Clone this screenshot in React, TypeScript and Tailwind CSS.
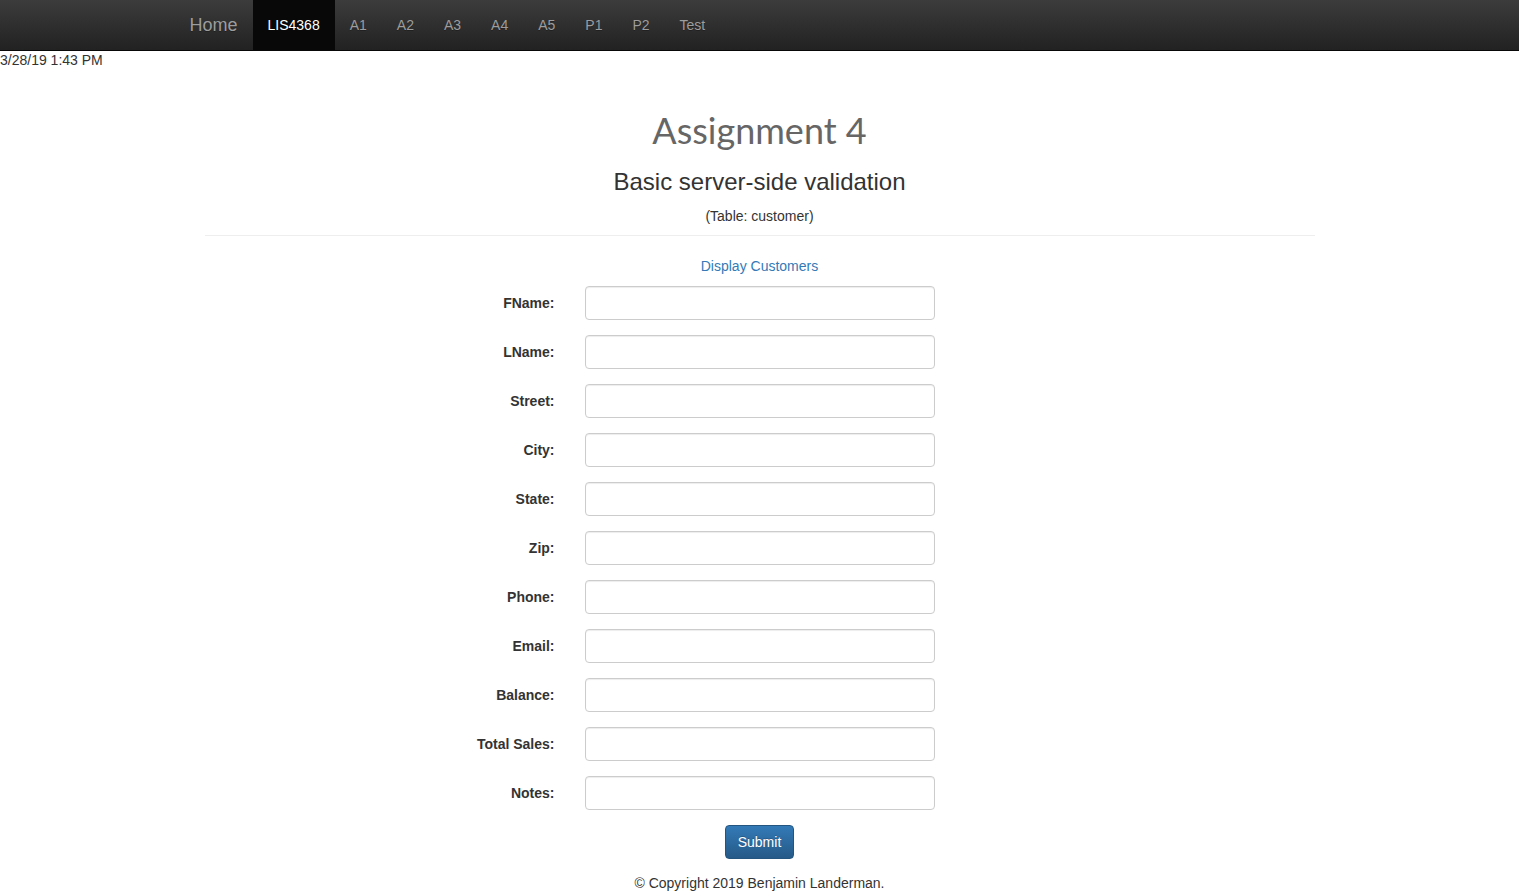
const navLinks = ['A1', 'A2', 'A3', 'A4', 'A5', 'P1', 'P2', 'Test']

const fields = [
  'FName',
  'LName',
  'Street',
  'City',
  'State',
  'Zip',
  'Phone',
  'Email',
  'Balance',
  'Total Sales',
  'Notes',
]

function NavBar() {
  return (
    <nav className="h-[51px] border-b border-[#080808] bg-gradient-to-b from-[#3c3c3c] to-[#222222]">
      <div className="mx-auto flex h-[50px] w-[1170px] px-[15px]">
        <a className="-ml-[15px] flex h-[50px] items-center px-[15px] text-[18px] text-[#9d9d9d] [text-shadow:0_1px_0_rgba(0,0,0,0.25)]">
          Home
        </a>
        <ul className="flex">
          <li className="flex h-[50px] items-center bg-[#080808] px-[15px] text-[14px] text-white">LIS4368</li>
          {navLinks.map((l) => (
            <li key={l} className="flex h-[50px] items-center px-[15px] text-[14px] text-[#9d9d9d] [text-shadow:0_1px_0_rgba(0,0,0,0.25)]">
              {l}
            </li>
          ))}
        </ul>
      </div>
    </nav>
  )
}

function FormRow({ label }: { label: string }) {
  return (
    <div className="mb-[15px] grid grid-cols-[365px_350px] items-center gap-x-[30px]">
      <label className="text-right text-[14px] font-bold text-[#333]">{label}:</label>
      <input
        type="text"
        className="h-[34px] w-[350px] rounded-[4px] border border-[#ccc] bg-white px-3 text-[14px] shadow-[inset_0_1px_1px_rgba(0,0,0,0.075)] outline-none"
      />
    </div>
  )
}

export default function App() {
  return (
    <div className="min-h-[894px] bg-white font-['Liberation_Sans',Arial,sans-serif] text-[14px] leading-[20px] text-[#333]">
      <NavBar />
      <div className="h-[20px] leading-[18px]">3/28/19 1:43 PM</div>

      <div className="mx-auto w-[1170px] px-[15px]">
        <div className="mx-[15px] text-center">
          <h2 className="mt-[38px] font-['Lato',sans-serif] text-[36px] leading-[42px] text-[#666]">Assignment 4</h2>
          <h3 className="mt-[18px] text-[24px] leading-[26px] text-[#333]">Basic server-side validation</h3>
          <p className="mt-[11px] leading-[20px]">(Table: customer)</p>
          <hr className="mt-[9px] border-t border-[#eee]" />
        </div>

        <div className="mt-[20px] text-center">
          <a className="text-[#337ab7]">Display Customers</a>
        </div>

        <form className="mt-[10px]">
          {fields.map((f) => (
            <FormRow key={f} label={f} />
          ))}
          <div className="text-center">
            <button
              type="button"
              className="h-[34px] rounded-[4px] border border-[#245580] bg-gradient-to-b from-[#337ab7] to-[#265a88] px-3 text-[14px] text-white [text-shadow:0_-1px_0_rgba(0,0,0,0.2)]"
            >
              Submit
            </button>
          </div>
        </form>

        <p className="mt-[14px] text-center">© Copyright 2019 Benjamin Landerman.</p>
      </div>
    </div>
  )
}
